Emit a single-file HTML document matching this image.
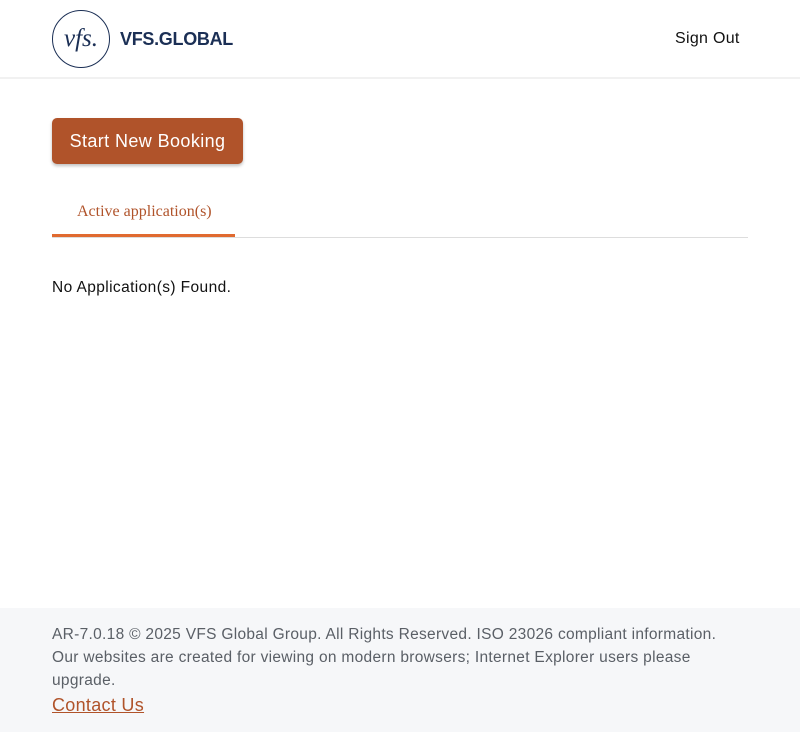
<!DOCTYPE html>
<html><head><style>
body{margin:0;width:800px;height:732px;position:relative;background:#fff;font-family:"Liberation Sans",sans-serif;overflow:hidden}
.hdr{position:absolute;left:0;top:0;width:800px;height:77px;border-bottom:2px solid #f1f1f1}
.logo{position:absolute;left:52px;top:10px;width:58px;height:58px;border:1.5px solid #1b2f55;border-radius:50%;box-sizing:border-box;color:#1b2f55;font-family:"Liberation Serif",serif;font-style:italic;font-size:25px;text-align:center;line-height:56px}
.brand{position:absolute;left:120px;top:29px;font-size:18px;color:#1b2f55;font-weight:bold;letter-spacing:-0.3px}
.so{position:absolute;left:675px;top:30px;font-size:16px;color:#111;letter-spacing:0.3px}
.btn{position:absolute;left:52px;top:118px;width:191px;height:46px;background:#b0532a;border-radius:5px;box-shadow:0 2px 3px rgba(0,0,0,.25);color:#fff;font-size:18px;line-height:46px;text-align:center;letter-spacing:0.4px}
.tab{position:absolute;left:77px;top:203px;font-family:"Liberation Serif",serif;font-size:16px;color:#b0532a}
.line{position:absolute;left:52px;top:237px;width:696px;height:1px;background:#ddd}
.ul{position:absolute;left:52px;top:234px;width:183px;height:3px;background:#e06a30}
.none{position:absolute;left:52px;top:279px;font-size:15.5px;color:#111;letter-spacing:0.4px}
.ft{position:absolute;left:0;top:608px;width:800px;height:124px;background:#f6f7f9;color:#5a5f66;font-size:15.5px;line-height:23px;letter-spacing:0.3px}
.ft div{position:absolute;left:52px;top:15px;width:690px}
.ft a{color:#b0532a;font-size:18px;text-decoration:underline;line-height:26px}
</style></head><body>
<div class="hdr"><div class="logo">vfs.</div><div class="brand">VFS.GLOBAL</div><div class="so">Sign Out</div></div>
<div class="btn">Start New Booking</div>
<div class="tab">Active application(s)</div>
<div class="line"></div><div class="ul"></div>
<div class="none">No Application(s) Found.</div>
<div class="ft"><div>AR-7.0.18 © 2025 VFS Global Group. All Rights Reserved. ISO 23026 compliant information.<br>Our websites are created for viewing on modern browsers; Internet Explorer users please<br>upgrade.<br><a>Contact Us</a></div></div>
</body></html>
